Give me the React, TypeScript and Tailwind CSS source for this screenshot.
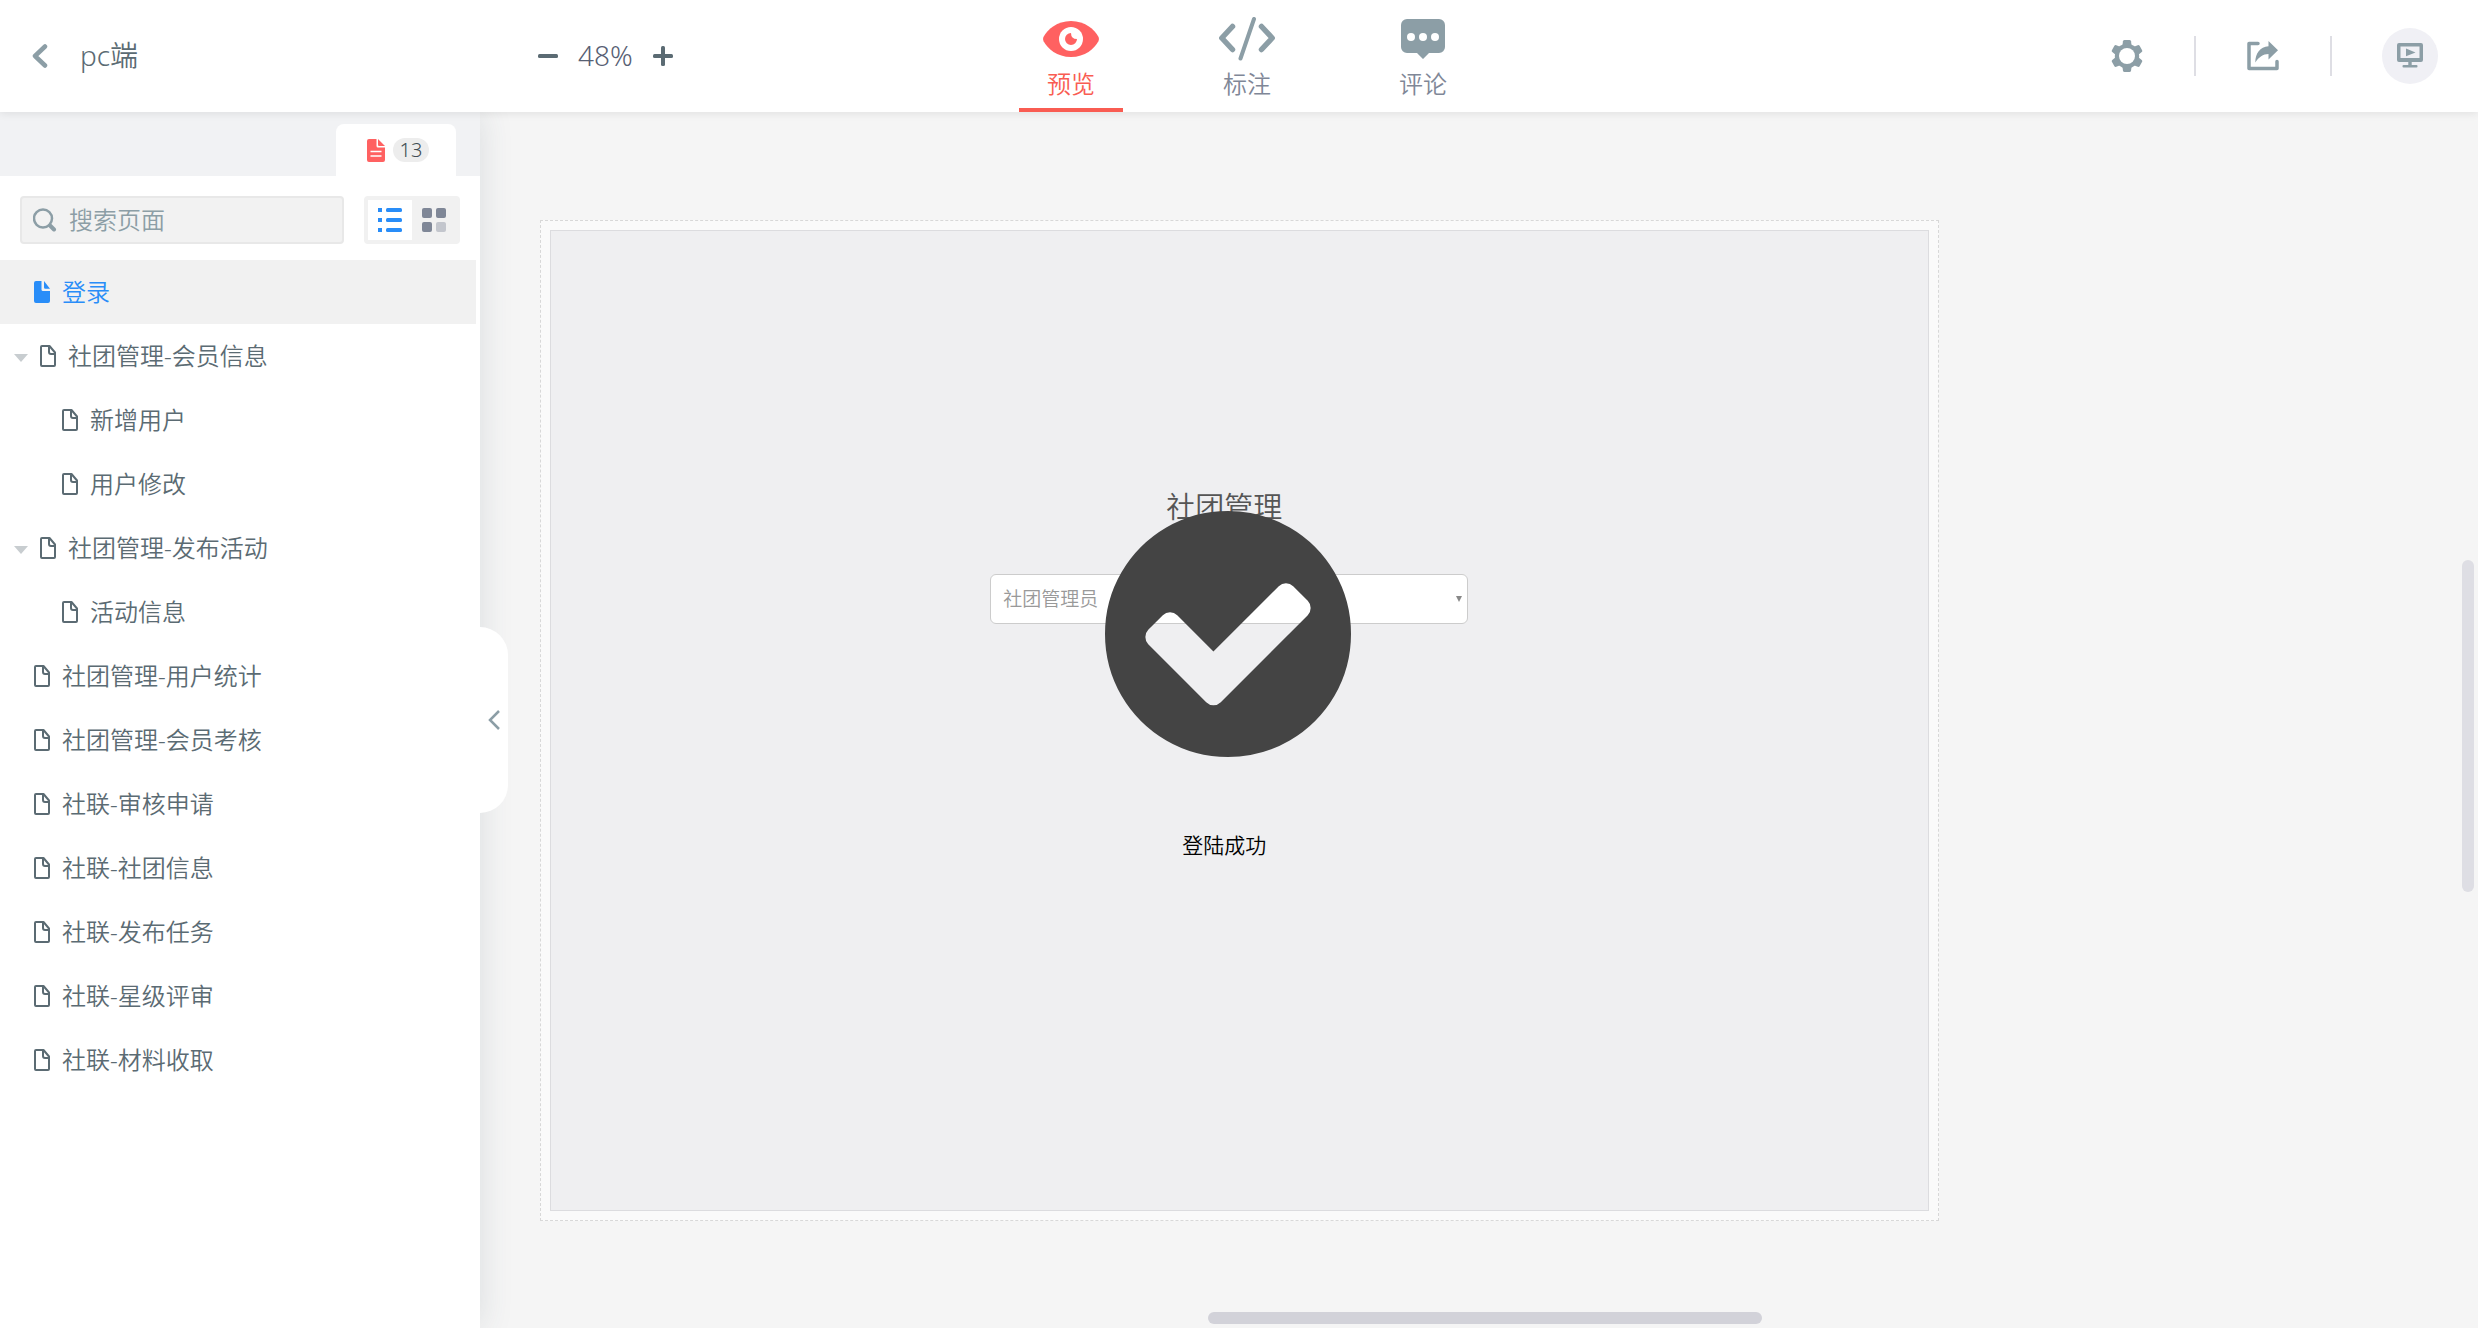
import clsx from "clsx";
import { useState, type FC, type ReactNode } from "react";

interface IPage {
  name: string;
  level: 0 | 1;
  hasChildren?: boolean;
}

const pages: IPage[] = [
  { name: "登录", level: 0 },
  { name: "社团管理-会员信息", level: 0, hasChildren: true },
  { name: "新增用户", level: 1 },
  { name: "用户修改", level: 1 },
  { name: "社团管理-发布活动", level: 0, hasChildren: true },
  { name: "活动信息", level: 1 },
  { name: "社团管理-用户统计", level: 0 },
  { name: "社团管理-会员考核", level: 0 },
  { name: "社联-审核申请", level: 0 },
  { name: "社联-社团信息", level: 0 },
  { name: "社联-发布任务", level: 0 },
  { name: "社联-星级评审", level: 0 },
  { name: "社联-材料收取", level: 0 },
];

const EyeIcon = () => (
  <svg width="56" height="36" viewBox="0 0 56 36" fill="currentColor">
    <path d="M28 0C14 0 4.500 8.500.6 15.800Q-.5 18 .6 20.200C4.500 27.500 14 36 28 36s23.500-8.500 27.400-15.800q1.100-2.200 0-4.400C51.500 8.500 42 0 28 0z" />
    <circle cx="28" cy="18" r="12" fill="#fff" />
    <path d="M28 12a6 6 0 1 0 6 6q-6 0-6-6z" />
  </svg>
);

const CodeIcon = () => (
  <svg
    width="56"
    height="44"
    viewBox="0 0 56 44"
    fill="none"
    stroke="currentColor"
    strokeLinecap="round"
    strokeLinejoin="round"
  >
    <path d="M13.500 9.500 2.800 21l10.700 11.500M42.500 9.500 53.200 21 42.500 32.500" strokeWidth="5.500" />
    <path d="M35 2 21.500 41.500" strokeWidth="4" />
  </svg>
);

const CommentIcon = () => (
  <svg width="44" height="40" viewBox="0 0 44 40" fill="currentColor">
    <path d="M6 0h32a6 6 0 0 1 6 6v22a6 6 0 0 1-6 6H28l-6 6-6-6H6a6 6 0 0 1-6-6V6a6 6 0 0 1 6-6z" />
    <circle cx="10" cy="18" r="4" fill="#fff" />
    <circle cx="22" cy="18" r="4" fill="#fff" />
    <circle cx="34" cy="18" r="4" fill="#fff" />
  </svg>
);

const GearIcon = () => (
  <svg width="32" height="32" viewBox="0 0 32 32">
    <g fill="currentColor">
      <circle cx="16" cy="16" r="12.200" />
      {[0, 60, 120, 180, 240, 300].map((angle) => (
        <path
          key={angle}
          d="M13.500 0h5q1.300 0 1.500 1.300l.6 4.200h-9.200l.6-4.200Q12.200 0 13.500 0z"
          transform={`rotate(${angle} 16 16)`}
        />
      ))}
    </g>
    <circle cx="16" cy="16" r="8" fill="#fff" />
  </svg>
);

const ShareIcon = () => (
  <svg width="32" height="30" viewBox="0 0 32 30">
    <path
      d="M11 2.500H2V27.500H30V20.500"
      fill="none"
      stroke="currentColor"
      strokeWidth="3.500"
      strokeLinecap="round"
      strokeLinejoin="round"
    />
    <path
      d="M21.500 0 31 9.200 21.500 18.500V13C16 13 12 16 8.300 21.500 8.300 12.500 13 5.500 21.500 5.200z"
      fill="currentColor"
    />
  </svg>
);

const PresentIcon = () => (
  <svg width="26" height="26" viewBox="0 0 26 26" fill="currentColor">
    <path d="M2 0h22a2 2 0 0 1 2 2v15a2 2 0 0 1-2 2H2a2 2 0 0 1-2-2V2a2 2 0 0 1 2-2zm1.500 3.500V15h19V3.500z" fillRule="evenodd" />
    <path d="M9 5.500 18.500 9.400 9 13.200zM11.300 19h3.400v3.500h-3.400z" />
    <rect x="5.500" y="22" width="15" height="2.500" rx="1" />
  </svg>
);

const FileIcon: FC<{ filled?: boolean }> = ({ filled }) =>
  filled ? (
    <svg width="16" height="22" viewBox="0 0 16 22" fill="currentColor">
      <path d="M2 0h5.500v8.500q0 1.500 1.500 1.500h7v10a2 2 0 0 1-2 2H2a2 2 0 0 1-2-2V2a2 2 0 0 1 2-2zM10 0l6 7.800h-4.800q-1.200 0-1.200-1.200z" />
    </svg>
  ) : (
    <svg width="16" height="22" viewBox="0 0 16 22" fill="none" stroke="currentColor" strokeWidth="2">
      <path d="M2 1h7.500L15 7.500V20q0 1-1 1H2q-1 0-1-1V2q0-1 1-1z" strokeLinejoin="round" />
      <path d="M9 1v6q0 2 2 2h4" />
    </svg>
  );

const PagesIcon = () => (
  <svg width="18" height="23" viewBox="0 0 18 23">
    <path
      d="M2 0h7.500v7q0 1.500 1.500 1.500h7V21a2 2 0 0 1-2 2H2a2 2 0 0 1-2-2V2a2 2 0 0 1 2-2zM11 0l7 7h-6q-1 0-1-1z"
      fill="#ff6161"
    />
    <path d="M3.500 12.500h11M3.500 17h11" stroke="#fff" strokeWidth="1.500" />
  </svg>
);

const NavTab: FC<{ label: string; active?: boolean; icon: ReactNode }> = ({ label, active, icon }) => (
  <button
    className={clsx(
      "flex h-28 w-26 flex-col items-center border-b-4 pt-[17px]",
      active ? "border-[#f95c52] text-[#ff6161]" : "border-transparent text-[#8c9ea6]",
    )}
  >
    <span className="flex h-11 items-center">{icon}</span>
    <span className={clsx("mt-1 text-2xl leading-[38px]", active ? "text-[#f95c52]" : "text-[#7f8797]")}>{label}</span>
  </button>
);

const Header = () => (
  <header className="relative z-20 grid h-28 grid-cols-[1fr_auto_1fr] bg-white shadow-[0_2px_8px_rgba(0,0,0,0.08)]">
    <div className="flex items-center pl-8 text-[28px] text-[#5b6b73]">
      <button aria-label="返回" className="text-[#8c9ea6]">
        <svg width="16" height="24" viewBox="0 0 16 24" fill="none" stroke="currentColor" strokeWidth="4.500" strokeLinecap="round" strokeLinejoin="round">
          <path d="M13 2.500 3 12l10 9.500" />
        </svg>
      </button>
      <h1 className="w-[490px] pb-0.5 pl-8">pc端</h1>
      <div className="flex items-center gap-5">
        <button aria-label="缩小" className="w-5">
          <svg width="20" height="20" viewBox="0 0 20 20" fill="currentColor">
            <rect y="8" width="20" height="4" rx="1.500" />
          </svg>
        </button>
        <span className="pb-0.5 text-[#576073]">48%</span>
        <button aria-label="放大" className="w-5">
          <svg width="20" height="20" viewBox="0 0 20 20" fill="currentColor">
            <rect y="8" width="20" height="4" rx="1.500" />
            <rect x="8" width="4" height="20" rx="1.500" />
          </svg>
        </button>
      </div>
    </div>
    <nav className="flex gap-18 pl-4">
      <NavTab label="预览" active icon={<EyeIcon />} />
      <NavTab label="标注" icon={<CodeIcon />} />
      <NavTab label="评论" icon={<CommentIcon />} />
    </nav>
    <div className="flex items-center justify-end gap-[50px] pr-10 text-[#8c9ea6]">
      <button aria-label="设置" className="flex w-[34px] justify-center">
        <GearIcon />
      </button>
      <span className="h-10 w-0.5 bg-[#dedee4]" />
      <button aria-label="分享" className="flex w-[34px] justify-center">
        <ShareIcon />
      </button>
      <span className="h-10 w-0.5 bg-[#dedee4]" />
      <button aria-label="演示" className="flex size-14 items-center justify-center rounded-full bg-[#f0f0f5]">
        <PresentIcon />
      </button>
    </div>
  </header>
);

interface IPageRowProps {
  page: IPage;
  active: boolean;
  onSelect: () => void;
}

const PageRow: FC<IPageRowProps> = ({ page, active, onSelect }) => (
  <li>
    <button
      onClick={onSelect}
      className={clsx(
        "flex h-16 w-full items-center gap-3 pb-px text-left text-2xl",
        page.hasChildren ? "pl-3.5" : page.level === 1 ? "pl-[62px]" : "pl-[34px]",
        active ? "bg-[#f1f1f1] text-[#298df8]" : "text-[#5b6b73]",
      )}
    >
      {page.hasChildren && (
        <svg width="14" height="8" viewBox="0 0 14 8" fill="#c8cdd0" className="mt-1">
          <path d="M0 0h14L7 8z" />
        </svg>
      )}
      <FileIcon filled={active} />
      <span>{page.name}</span>
    </button>
  </li>
);

const Sidebar = () => {
  const [selected, setSelected] = useState("登录");

  return (
    <aside className="relative z-10 w-[480px] shrink-0 bg-white shadow-[0_0_32px_rgba(60,80,90,0.14)]">
      <div className="flex h-16 items-end justify-end bg-[#f1f2f4] pr-6">
        <button className="flex h-13 w-30 items-center justify-center gap-2 rounded-t-lg bg-white pl-1">
          <PagesIcon />
          <span className="w-9 rounded-full bg-[#ededed] text-center text-xl leading-6 text-[#414d54]">13</span>
        </button>
      </div>
      <div className="flex gap-5 p-5 pb-4">
        <label className="flex h-12 flex-1 items-center gap-3 rounded border-2 border-[#e8e8e8] bg-[#f2f2f2] pl-[11px] text-[#8c9ea6]">
          <svg width="24" height="24" viewBox="0 0 24 24" fill="none" stroke="currentColor" strokeLinecap="round" className="shrink-0">
            <circle cx="10" cy="10.500" r="9" strokeWidth="2.500" />
            <path d="m17 17.500 4 4" strokeWidth="4" />
          </svg>
          <input
            aria-label="搜索页面"
            placeholder="搜索页面"
            className="w-full min-w-0 bg-transparent text-2xl outline-none placeholder:text-[#8c9ea6]"
          />
        </label>
        <div className="flex h-12 w-24 gap-px rounded bg-[#f1f1f1] p-1">
          <button aria-label="列表" className="flex flex-1 items-center justify-center bg-white">
            <svg width="24" height="24" viewBox="0 0 24 24" fill="#298df8">
              {[0, 10, 20].map((y) => (
                <g key={y}>
                  <rect y={y} width="4" height="4" />
                  <rect x="8" y={y} width="16" height="4" rx="1.500" />
                </g>
              ))}
            </svg>
          </button>
          <button aria-label="网格" className="flex flex-1 items-center justify-center">
            <svg width="24" height="24" viewBox="0 0 24 24" fill="#7f8797">
              <rect width="10" height="10" rx="2" />
              <rect x="14" width="10" height="10" rx="2" />
              <rect y="14" width="10" height="10" rx="2" />
              <rect x="14" y="14" width="10" height="10" rx="2" fill="#c3c6cd" />
            </svg>
          </button>
        </div>
      </div>
      <ul className="pr-1">
        {pages.map((page) => (
          <PageRow
            key={page.name}
            page={page}
            active={page.name === selected}
            onSelect={() => setSelected(page.name)}
          />
        ))}
      </ul>
      <button
        aria-label="收起"
        className="absolute top-1/2 left-full flex h-[186px] w-7 -translate-y-1/2 items-center justify-center rounded-r-[28px] bg-white text-[#8c9ea6]"
      >
        <svg width="12" height="20" viewBox="0 0 12 20" fill="none" stroke="currentColor" strokeWidth="2.500">
          <path d="M11 1 2 10l9 9" />
        </svg>
      </button>
    </aside>
  );
};

const Artboard = () => (
  <div className="mt-[108px] ml-15 aspect-[1398/1001] w-[70%] border border-dashed border-[#d8d8d8] bg-[#fafafa] p-[9px]">
    <div className="flex h-full justify-center border border-[#dcdcdf] bg-[#efeff1] pt-[260px] pr-5">
      <div className="relative flex w-[478px] flex-col items-center">
        <h2 className="pr-2.5 text-[29px] leading-8 text-[#555]">社团管理</h2>
        <div className="relative mt-[51px] w-full">
          <select
            aria-label="角色"
            className="h-[50px] w-full appearance-none rounded-md border border-[#ccc] bg-white px-3 text-[19px] text-[#999]"
          >
            <option>社团管理员</option>
          </select>
          <svg width="6" height="6" viewBox="0 0 6 6" fill="#888" className="pointer-events-none absolute top-[22px] right-1.5">
            <path d="M0 0h6L3 6z" />
          </svg>
        </div>
        <p className="mt-[207px] pr-2.5 text-[21px] leading-7 text-black">登陆成功</p>
        <svg
          viewBox="128 128 1536 1536"
          fill="#444"
          className="pointer-events-none absolute top-5 left-[115px] size-[246px]"
        >
          <path d="M1412 734q0-28-18-46l-91-90q-19-19-45-19t-45 19l-408 407-226-226q-19-19-45-19t-45 19l-91 90q-18 18-18 46 0 27 18 45l362 362q19 19 45 19 27 0 46-19l543-543q18-18 18-45zm252 162q0 209-103 385.500t-279.500 279.500-385.500 103-385.500-103-279.500-279.500-103-385.500 103-385.500 279.500-279.500 385.500-103 385.500 103 279.500 279.500 103 385.500z" />
        </svg>
      </div>
    </div>
  </div>
);

const App = () => (
  <div className="flex min-h-screen flex-col bg-[#f5f5f5] font-['Noto_Sans','Noto_Sans_CJK_SC',sans-serif] font-[350]">
    <Header />
    <div className="flex flex-1">
      <Sidebar />
      <main className="relative flex-1">
        <Artboard />
        <span className="absolute top-[448px] right-1 h-[332px] w-3 rounded-full bg-[#dedee4]" />
        <span className="absolute bottom-1 left-[728px] h-3 w-[554px] rounded-full bg-[#d2d2d9]" />
      </main>
    </div>
  </div>
);

export default App;
